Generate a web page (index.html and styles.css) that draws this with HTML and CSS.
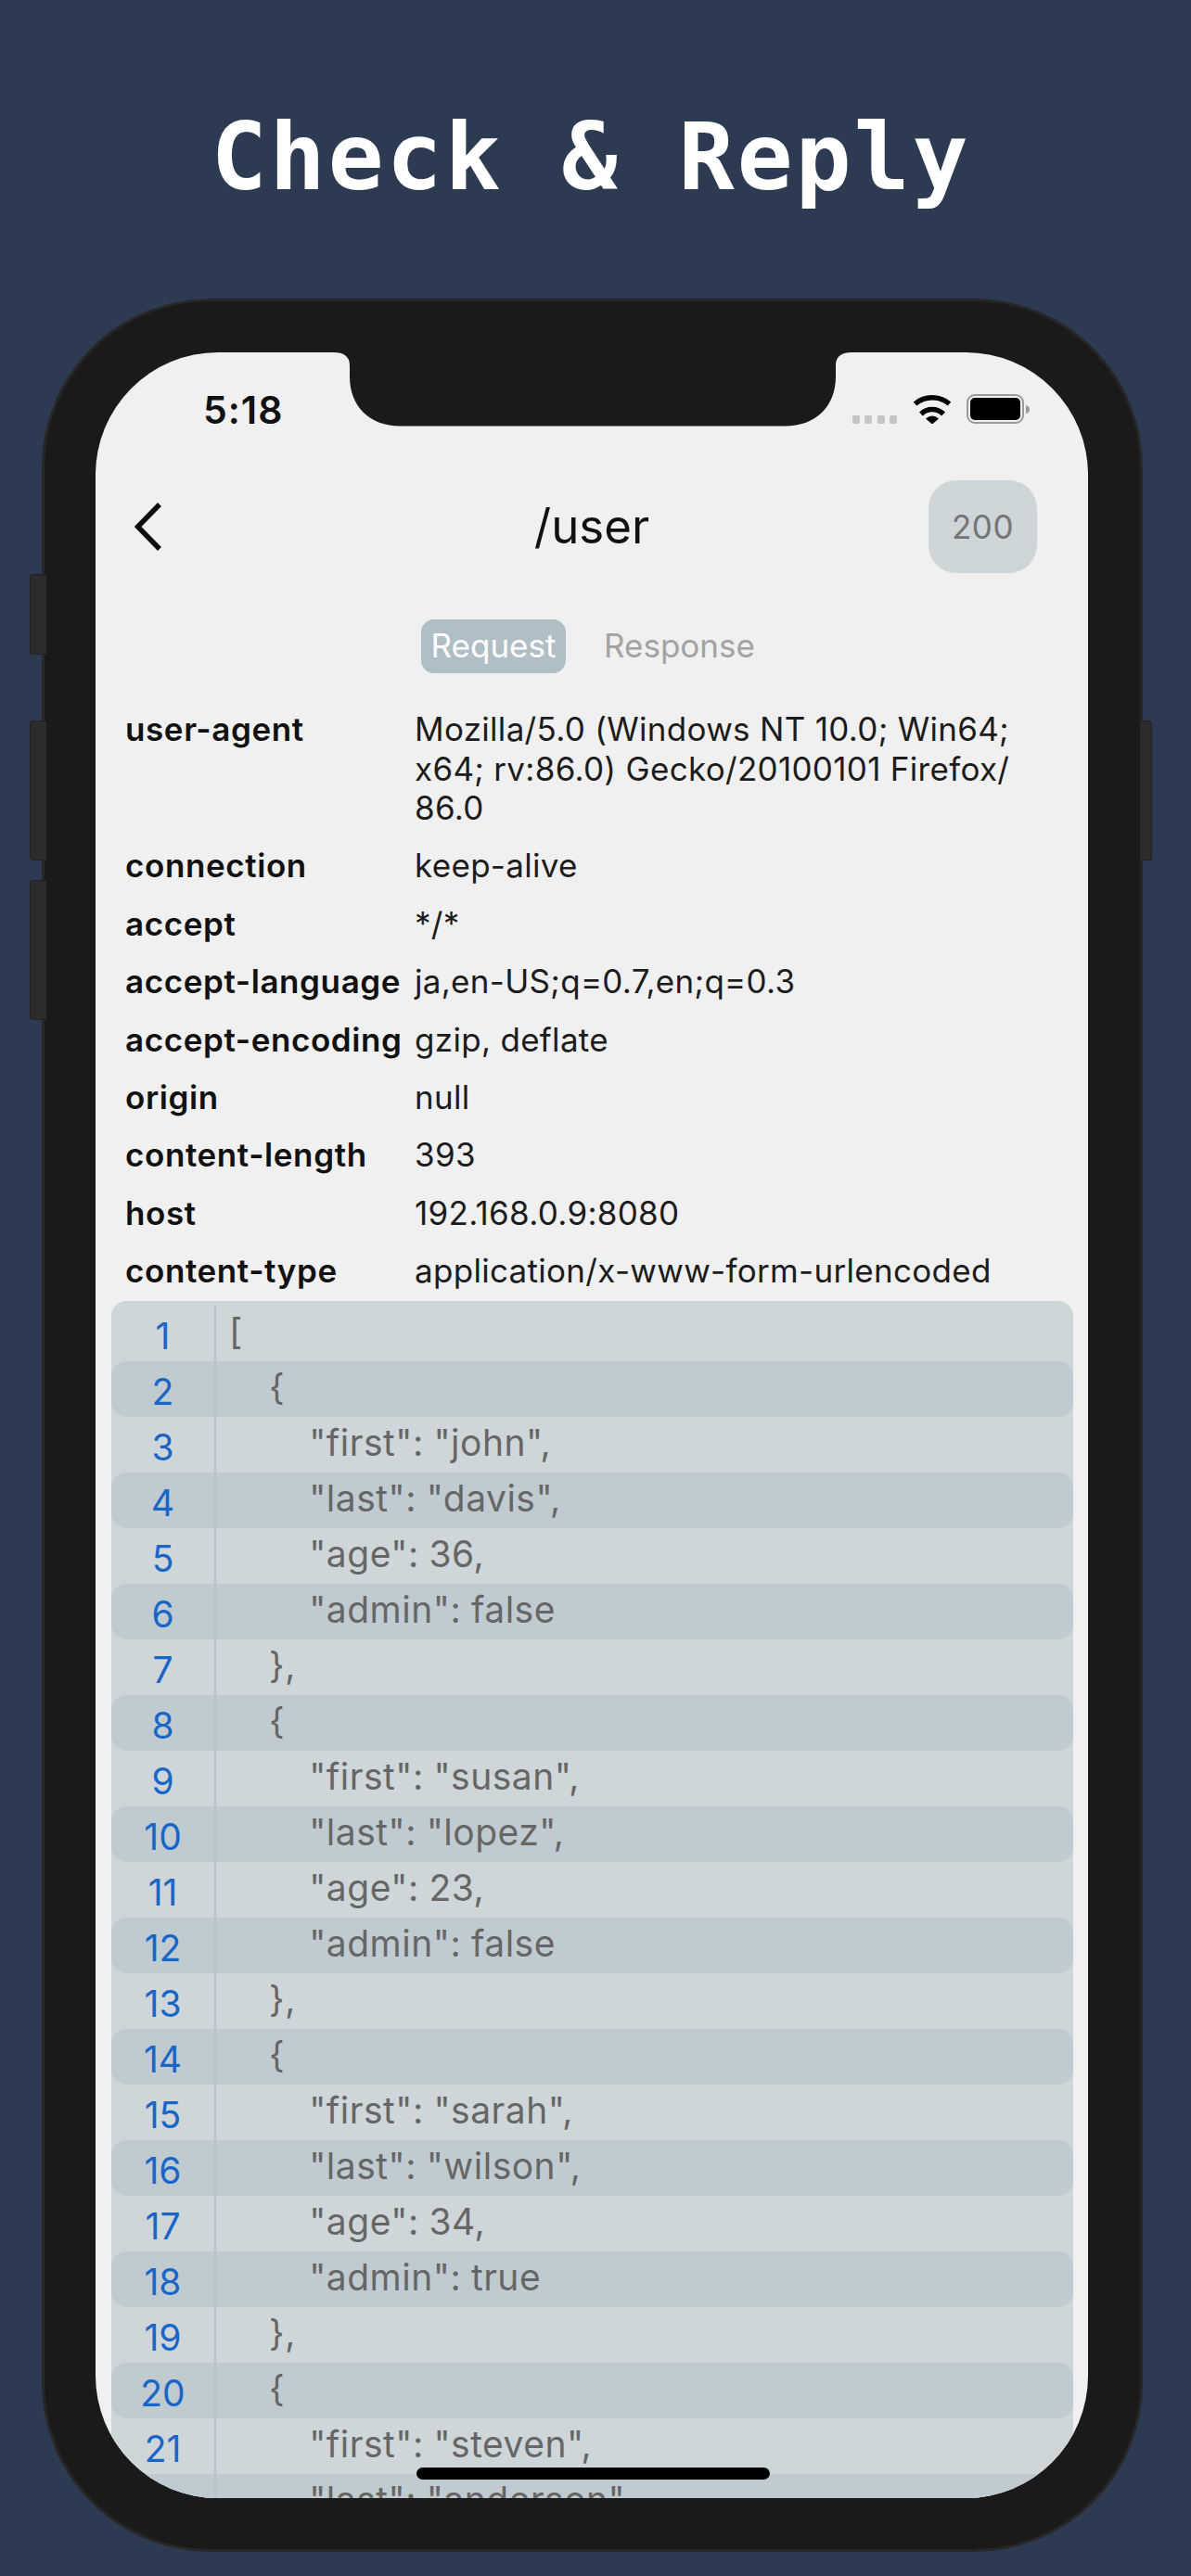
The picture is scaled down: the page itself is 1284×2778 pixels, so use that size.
FILE: index.html
```html
<!DOCTYPE html>
<html lang="en">
<head>
<meta charset="utf-8">
<title>Check &amp; Reply</title>
<link rel="stylesheet" href="styles.css">
</head>
<body>
<main class="page">
  <h1 class="headline">Check &amp; Reply</h1>
  <section class="phone">
    <span class="btn btn-mute"></span>
    <span class="btn btn-up"></span>
    <span class="btn btn-down"></span>
    <span class="btn-power"></span>
    <div class="screen">
      <svg class="notch" viewBox="0 0 558 80" width="558" height="80" aria-hidden="true"><path d="M0 0C10 0 17 4 17 14V26C17 58 38 79.500 72 79.500H486C520 79.500 541 58 541 26V14C541 4 548 0 558 0Z" fill="#1a1a1a"/></svg>
      <div class="status">
        <span class="time">5:18</span>
        <div class="status-icons">
          <div class="signal"><i></i><i></i><i></i><i></i></div>
          <svg class="wifi" viewBox="0 0 42 32" width="42" height="32" aria-hidden="true"><path d="M2.500 10.500A29 29 0 0 1 39.500 10.500M9 21.500A17 17 0 0 1 33 21.500" fill="none" stroke="#000" stroke-width="5.500"/><path d="M14 26.500Q21 20.500 28 26.500L21 32.500Z" fill="#000"/></svg>
          <svg class="battery" viewBox="0 0 68 32" width="68" height="32" aria-hidden="true"><rect x="1" y="1" width="60" height="30" rx="8" fill="none" stroke="#9a9a9a" stroke-width="2"/><rect x="4" y="4" width="54" height="24" rx="5" fill="#000"/><path d="M64 12C66.500 12.500 68 14 68 16.500S66.500 20.500 64 21Z" fill="#9a9a9a"/></svg>
        </div>
      </div>
      <header class="nav">
        <svg class="back" viewBox="0 0 30 52" width="30" height="52" aria-hidden="true"><path d="M27 2L3.500 26L27 50" fill="none" stroke="#0d0d0d" stroke-width="5.500"/></svg>
        <div class="nav-title">/user</div>
        <div class="code-badge">200</div>
      </header>
      <div class="tabs">
        <span class="tab tab-on">Request</span>
        <span class="tab">Response</span>
      </div>
      <dl class="headers">
        <div class="hrow"><dt>user-agent</dt><dd>Mozilla/5.0 (Windows NT 10.0; Win64; x64; rv:86.0) Gecko/20100101 Firefox/<wbr>86.0</dd></div>
        <div class="hrow"><dt>connection</dt><dd>keep-alive</dd></div>
        <div class="hrow"><dt>accept</dt><dd>*/*</dd></div>
        <div class="hrow"><dt>accept-language</dt><dd>ja,en-US;q=0.7,en;q=0.3</dd></div>
        <div class="hrow"><dt>accept-encoding</dt><dd>gzip, deflate</dd></div>
        <div class="hrow"><dt>origin</dt><dd>null</dd></div>
        <div class="hrow"><dt>content-length</dt><dd>393</dd></div>
        <div class="hrow"><dt>host</dt><dd>192.168.0.9:8080</dd></div>
        <div class="hrow"><dt>content-type</dt><dd>application/x-www-form-urlencoded</dd></div>
      </dl>
      <div class="codeblock">
        <div class="cl"><span class="n">1</span><code>[</code></div>
        <div class="cl"><span class="n">2</span><code>    {</code></div>
        <div class="cl"><span class="n">3</span><code>        "first": "john",</code></div>
        <div class="cl"><span class="n">4</span><code>        "last": "davis",</code></div>
        <div class="cl"><span class="n">5</span><code>        "age": 36,</code></div>
        <div class="cl"><span class="n">6</span><code>        "admin": false</code></div>
        <div class="cl"><span class="n">7</span><code>    },</code></div>
        <div class="cl"><span class="n">8</span><code>    {</code></div>
        <div class="cl"><span class="n">9</span><code>        "first": "susan",</code></div>
        <div class="cl"><span class="n">10</span><code>        "last": "lopez",</code></div>
        <div class="cl"><span class="n">11</span><code>        "age": 23,</code></div>
        <div class="cl"><span class="n">12</span><code>        "admin": false</code></div>
        <div class="cl"><span class="n">13</span><code>    },</code></div>
        <div class="cl"><span class="n">14</span><code>    {</code></div>
        <div class="cl"><span class="n">15</span><code>        "first": "sarah",</code></div>
        <div class="cl"><span class="n">16</span><code>        "last": "wilson",</code></div>
        <div class="cl"><span class="n">17</span><code>        "age": 34,</code></div>
        <div class="cl"><span class="n">18</span><code>        "admin": true</code></div>
        <div class="cl"><span class="n">19</span><code>    },</code></div>
        <div class="cl"><span class="n">20</span><code>    {</code></div>
        <div class="cl"><span class="n">21</span><code>        "first": "steven",</code></div>
        <div class="cl"><span class="n">22</span><code>        "last": "anderson",</code></div>
      </div>
      <div class="home"></div>
    </div>
  </section>
</main>
</body>
</html>
```
FILE: styles.css
```css
* { box-sizing: border-box; }
html, body { margin: 0; padding: 0; }
body { background: #2c3a52; font-family: Inter, "Liberation Sans", sans-serif; }
.page { width: 1284px; height: 2778px; overflow: hidden; }

.headline {
  margin: 0;
  height: 322px;
  padding-top: 110px;
  padding-right: 10px;
  text-align: center;
  font: 700 100px/1.2 "DejaVu Sans Mono", monospace;
  letter-spacing: 2.800px;
  color: #fff;
  white-space: nowrap;
}

.phone {
  position: relative;
  width: 1187px;
  height: 2430px;
  margin-left: 45px;
  padding: 55px 56px 55px 55px;
  background: #1a1a1a;
  border: 3px solid #272727;
  border-radius: 182px;
}
.btn, .btn-power {
  position: absolute;
  background: #2c2c2c;
  border: 1px solid #222;
  width: 18px;
  border-radius: 4px;
}
.btn { left: -16px; border-right: 0; border-radius: 4px 0 0 4px; }
.btn-mute { top: 294px; height: 87px; }
.btn-up { top: 452px; height: 151px; }
.btn-down { top: 624px; height: 151px; }
.btn-power { right: -13px; top: 452px; height: 151px; width: 13px; border-left: 0; border-radius: 0 4px 4px 0; }

.screen {
  position: relative;
  width: 1070px;
  height: 2314px;
  overflow: hidden;
  background: #f0f0f0;
  border-radius: 132px;
}
.notch { position: absolute; left: 257px; top: 0; display: block; }
.home {
  position: absolute;
  left: 346px;
  bottom: 20px;
  width: 381px;
  height: 13px;
  background: #000;
  border-radius: 7px;
}

.status {
  height: 138px;
  padding: 38px 63px 0 116px;
  display: flex;
  justify-content: space-between;
  align-items: flex-start;
}
.time { font-size: 41px; line-height: 48px; font-weight: 600; letter-spacing: 1px; color: #111; }
.status-icons { display: flex; align-items: flex-start; margin-top: 7px; }
.signal { display: flex; gap: 5.300px; margin-top: 23px; margin-right: 17px; }
.signal i { width: 8px; height: 9px; border-radius: 2px; background: #c4c4c4; }
.wifi { display: block; margin-right: 16px; }
.battery { display: block; }

.nav {
  height: 100px;
  padding: 0 55px;
  display: grid;
  grid-template-columns: 1fr auto 1fr;
  align-items: center;
}
.back { display: block; margin-left: -13px; }
.nav-title { font-size: 51px; line-height: 60px; color: #111; }
.code-badge {
  justify-self: end;
  width: 117px;
  height: 100px;
  border-radius: 30px;
  background: #ced6d9;
  color: #757575;
  font-size: 35px;
  letter-spacing: 0.500px;
  display: flex;
  align-items: center;
  justify-content: center;
}

.tabs {
  margin-top: 50px;
  padding-left: 351px;
  display: flex;
  gap: 41px;
  height: 58px;
  font-size: 35px;
}
.tab { line-height: 56px; color: #a3a3a3; }
.tab-on {
  width: 156px;
  text-align: center;
  color: #fff;
  background: #b0bec5;
  border-radius: 14px;
}

.headers { margin: 39px 0 0; padding: 0 50px 0 32px; display: flex; flex-direction: column; gap: 19.900px; font-size: 35px; line-height: 42.500px; color: #111; }
.hrow { display: grid; grid-template-columns: 312px 1fr; }
dt { font-weight: 600; letter-spacing: 0.600px; white-space: nowrap; }
dd { margin: 0; letter-spacing: 0.300px; color: #1c1c1c; }

.codeblock {
  margin: 11px 16px 0 17px;
  padding-top: 5px;
  background: #ced6d9;
  border-radius: 16px 16px 0 0;
}
.cl { display: flex; height: 60px; border-radius: 16px; }
.cl:nth-child(even) { background: #c0cbd1; }
.n {
  width: 111px;
  padding-top: 4px;
  text-align: center;
  color: #1a66c6;
  font-size: 39px;
  line-height: 58px;
}
code {
  flex: 1;
  padding-left: 14px;
  border-left: 2px solid #b4c3cd;
  color: #666;
  font-family: Inter, "Liberation Sans", sans-serif;
  font-size: 39px;
  letter-spacing: 0.500px;
  word-spacing: -0.700px;
  line-height: 56px;
  white-space: pre;
}
```
